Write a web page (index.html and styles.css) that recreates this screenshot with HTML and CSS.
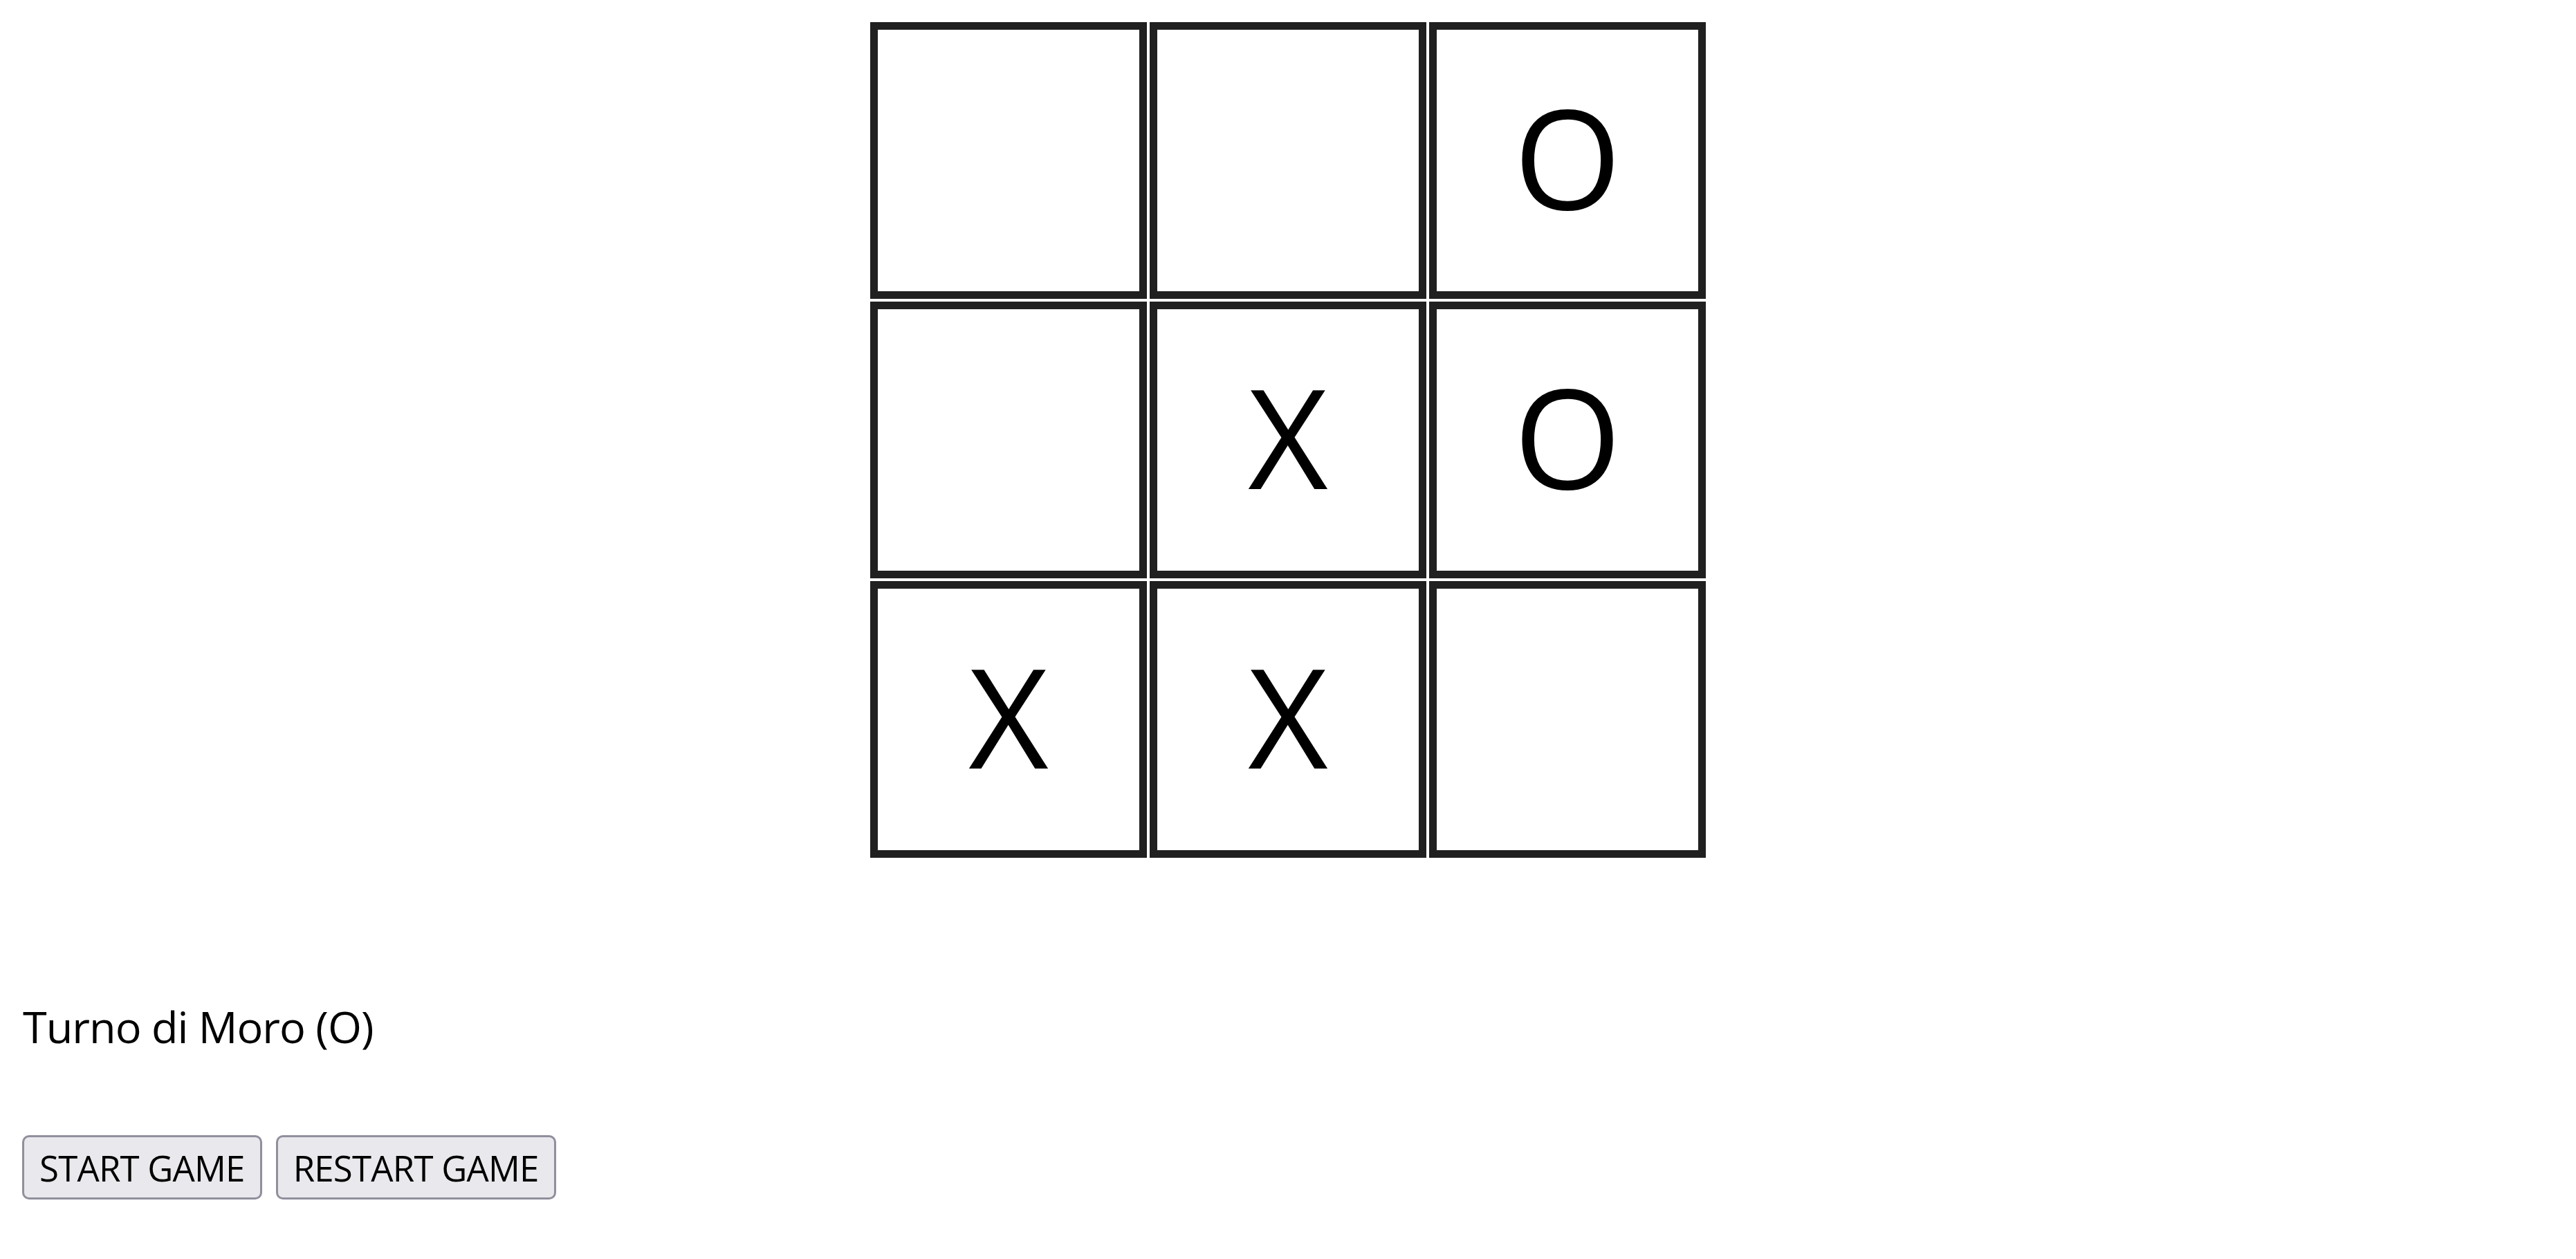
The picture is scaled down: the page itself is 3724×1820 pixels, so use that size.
FILE: index.html
```html
<!DOCTYPE html>
<html lang="it">
<head>
    <meta charset="UTF-8">
    <meta name="viewport" content="width=device-width, initial-scale=1.0">
    <title>Tris</title>
    <link rel="stylesheet" href="styles.css">
</head>
<body>
    <main>
        <div class="board" id="board">
            <div class="cell"></div>
            <div class="cell"></div>
            <div class="cell">O</div>
            <div class="cell"></div>
            <div class="cell">X</div>
            <div class="cell">O</div>
            <div class="cell">X</div>
            <div class="cell">X</div>
            <div class="cell"></div>
        </div>

        <p class="status" id="status">Turno di Moro (O)</p>

        <div class="controls">
            <button class="game-button" id="start-button">START GAME</button>
            <button class="game-button" id="restart-button">RESTART GAME</button>
        </div>
    </main>
</body>
</html>
```

FILE: styles.css
```css
body {
    background-color: #fff;
    color: #000;
    font-family: "Open Sans", "Noto Sans", sans-serif;
    margin: 0;
    padding: 0;
}
main {
    padding: 32px 0 0 0;
}
.board {
    display: grid;
    grid-template-columns: repeat(3, 400px);
    grid-auto-rows: 400px;
    gap: 4px;
    justify-content: center;
}
.cell {
    box-sizing: border-box;
    border: 11px solid #202020;
    display: flex;
    justify-content: center;
    align-items: center;
    font-size: 200px;
    line-height: 1;
    padding-bottom: 12px;
}
.status {
    margin: 201px 0 0 0;
    padding-left: 33px;
    font-size: 63px;
    letter-spacing: -1px;
    line-height: 86px;
}
.controls {
    display: flex;
    gap: 20px;
    margin-top: 114px;
    padding-left: 32px;
}
.game-button {
    font-family: "Open Sans", "Noto Sans", sans-serif;
    font-size: 51px;
    letter-spacing: -0.8px;
    height: 93px;
    padding: 0 22px;
    background-color: #e9e9ed;
    color: #000;
    border: 3px solid #8f8f9d;
    border-radius: 10px;
    cursor: pointer;
}
.game-button:hover {
    background-color: #d0d0d7;
}
```
